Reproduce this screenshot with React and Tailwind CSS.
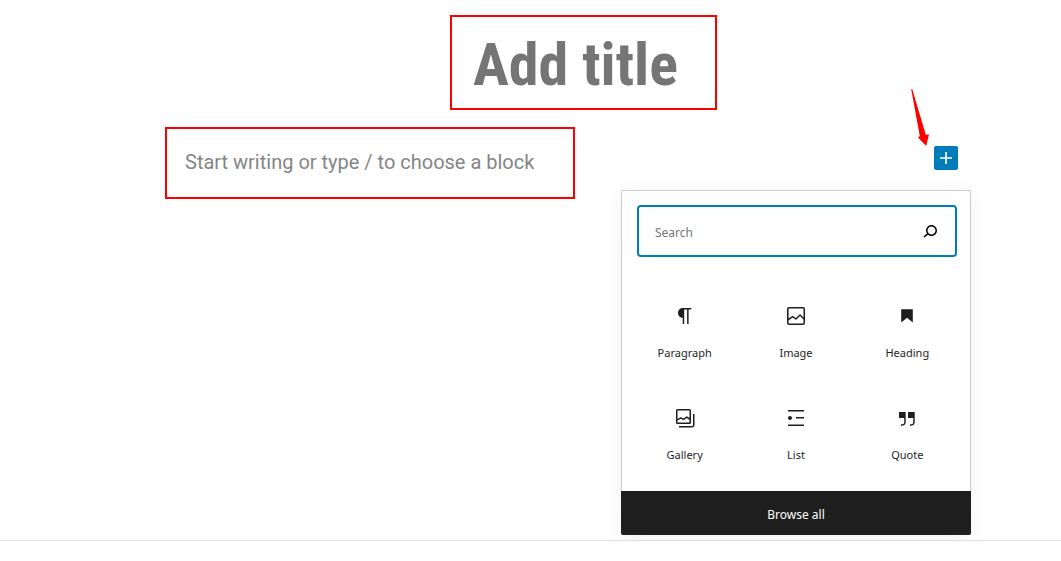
import React from 'react';

const BLOCKS = [
  {
    label: 'Paragraph',
    path: 'M18.3 4H9.9v-.1l-.9.2c-2.3.4-4 2.4-4 4.8s1.7 4.4 4 4.8l.7.1V20h1.5V5.5h2.9V20h1.5V5.5h2.7V4z'
  },
  {
    label: 'Image',
    path: 'M19 3H5c-1.1 0-2 .9-2 2v14c0 1.1.9 2 2 2h14c1.1 0 2-.9 2-2V5c0-1.1-.9-2-2-2zM5 4.5h14c.3 0 .5.2.5.5v8.4l-3-2.9c-.3-.3-.8-.3-1 0L11.9 14 9 12c-.3-.2-.6-.2-.8 0l-3.6 2.6V5c-.1-.3.1-.5.4-.5zm14 15H5c-.3 0-.5-.2-.5-.5v-2.4l4.1-3 3 1.9c.3.2.7.2.9-.1L16 12l3.5 3.4V19c0 .3-.2.5-.5.5z'
  },
  { label: 'Heading', path: 'M6.2 5.2v13.4l5.8-4.8 5.8 4.8V5.2z' },
  {
    label: 'Gallery',
    path: 'M16.375 4.5H4.625a.125.125 0 0 0-.125.125v8.254l2.859-1.54a.75.75 0 0 1 .68-.016l2.384 1.142 2.89-2.074a.75.75 0 0 1 .874 0l2.313 1.66V4.625a.125.125 0 0 0-.125-.125Zm.125 9.398-2.75-1.975-2.813 2.02a.75.75 0 0 1-.76.067l-2.444-1.17L4.5 14.583v1.792c0 .069.056.125.125.125h11.75a.125.125 0 0 0 .125-.125v-2.477ZM4.625 3C3.728 3 3 3.728 3 4.625v11.75C3 17.273 3.728 18 4.625 18h11.75c.898 0 1.625-.727 1.625-1.625V4.625C18 3.728 17.273 3 16.375 3H4.625ZM20 8v11c0 .69-.31 1-.999 1H6v1.5h13.001c1.52 0 2.499-.982 2.499-2.5V8H20Z'
  },
  {
    label: 'List',
    path: 'M4 4v1.5h16V4H4zm8 8.5h8V11h-8v1.5zM4 20h16v-1.5H4V20zm4-8c0-1.1-.9-2-2-2s-2 .9-2 2 .9 2 2 2 2-.9 2-2z'
  },
  {
    label: 'Quote',
    path: 'M13 6v6h5.2v4c0 .8-.2 1.4-.5 1.7-.6.6-1.6.6-2.5.5h-.3v1.5h.5c1 0 2.3-.1 3.3-1 .6-.6 1-1.6 1-2.8V6H13zm-9 6h5.2v4c0 .8-.2 1.4-.5 1.7-.6.6-1.6.6-2.5.5h-.3v1.5h.5c1 0 2.3-.1 3.3-1 .6-.6 1-1.6 1-2.8V6H4v6z'
  }
];

const SEARCH_PATH =
  'M13.5 6C10.5 6 8 8.5 8 11.5c0 1.1.3 2.1.9 3l-3.4 3 1 1.1 3.4-2.9c1 .9 2.2 1.4 3.6 1.4 3 0 5.5-2.5 5.5-5.5C19 8.5 16.5 6 13.5 6zm0 9.5c-2.2 0-4-1.8-4-4s1.8-4 4-4 4 1.8 4 4-1.8 4-4 4z';
const PLUS_PATH = 'M18 11.2h-5.2V6h-1.6v5.2H6v1.6h5.2V18h1.6v-5.2H18z';

function Icon({ path }) {
  return (
    <svg viewBox="0 0 24 24" className="w-6 h-6 shrink-0" fill="currentColor" fillRule="evenodd" aria-hidden="true">
      <path d={path} />
    </svg>
  );
}

function BlockButton({ block }) {
  return (
    <button type="button" className="h-[102px] pt-[21px] flex flex-col items-center text-[#1e1e1e]">
      <Icon path={block.path} />
      <span className="mt-4 text-[11px] leading-[18px]">{block.label}</span>
    </button>
  );
}

function Inserter() {
  return (
    <div className="w-[350px] -mr-[13px] bg-white border border-[#ccc] border-b-0 rounded-xs shadow-[0_3px_20px_rgba(25,30,35,0.06)] font-['Noto_Sans',sans-serif]">
      <div className="pt-[14px] pl-[15px] pr-[13px]">
        <div className="h-[52px] flex items-center pl-4 pr-[13px] border-2 border-[#007cba] rounded">
          <input
            type="text"
            aria-label="Search for a block"
            placeholder="Search"
            className="flex-1 min-w-0 pt-[3px] text-[12px] leading-[18px] outline-none placeholder:text-[#757575] placeholder:opacity-100"
          />
          <Icon path={SEARCH_PATH} />
        </div>
      </div>
      <div className="mt-[26px] px-[7px] pb-1 grid grid-cols-3">
        {BLOCKS.map((block) => (
          <BlockButton key={block.label} block={block} />
        ))}
      </div>
      {/* Footer covers the side borders of the popover */}
      <div className="-mx-px">
        <button type="button" className="w-full h-11 pt-[3px] bg-[#1e1e1e] text-white text-[12px] leading-[18px] rounded-b-xs">
          Browse all
        </button>
      </div>
    </div>
  );
}

export default function App() {
  return (
    <div className="bg-white">
      <main className="pt-[15px] pb-[5px] pl-[165px] pr-[103px] border-b border-[#e0e0e0]">
        <div className="flex justify-center pl-11">
          <input
            type="text"
            aria-label="Add title"
            placeholder="Add title"
            className="w-[267px] h-[95px] pl-[21px] pt-[3px] border-2 border-[#f00] outline-none font-['Roboto_Condensed','Roboto',sans-serif] font-bold text-[60px] placeholder:text-[#757575] placeholder:opacity-100"
          />
        </div>

        <div className="mt-[17px] flex items-start justify-between">
          <input
            type="text"
            aria-label="Empty block"
            placeholder="Start writing or type / to choose a block"
            className="w-[410px] h-[72px] pl-[18px] pb-[2px] border-2 border-[#f00] outline-none font-['Roboto',sans-serif] text-[20px] placeholder:text-[#858585] placeholder:opacity-100"
          />
          <div className="w-0 flex-1 mt-[19px] flex flex-col items-end gap-5">
            <div className="relative">
              <button type="button" aria-label="Add block" className="block w-6 h-6 bg-[#007cba] text-white rounded-xs">
                <Icon path={PLUS_PATH} />
              </button>
              {/* Arrow pointing at the add button */}
              <svg
                viewBox="0 0 20 60"
                className="absolute right-[28px] bottom-6 w-5 h-[60px]"
                fill="#f00"
                aria-hidden="true"
              >
                <path d="M2.2 3 L1.2 3.3 L9.8 50 L8 51.4 L16.2 60 L19 48.6 L15.8 48.8 Z" />
              </svg>
            </div>
            <Inserter />
          </div>
        </div>
      </main>
    </div>
  );
}
